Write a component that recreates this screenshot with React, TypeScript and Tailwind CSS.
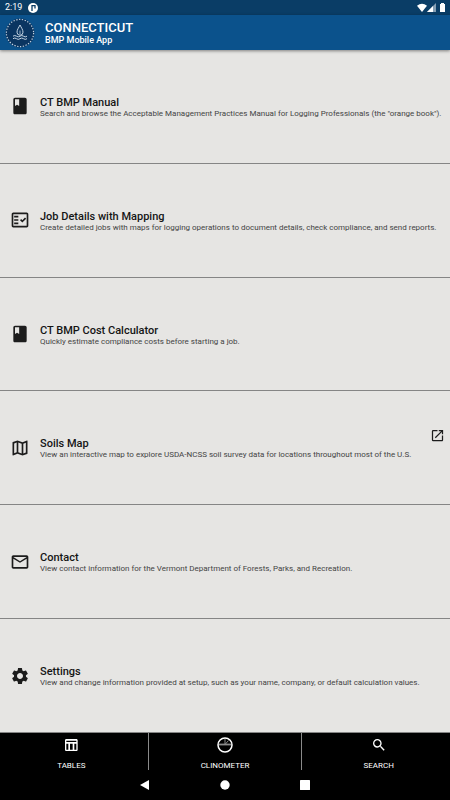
import type { ReactNode } from 'react';
import {
  MdBook,
  MdOpenInNew,
  MdOutlineEmail,
  MdOutlineFactCheck,
  MdOutlineMap,
  MdSearch,
  MdSettings,
} from 'react-icons/md';

type Item = { title: string; text: string; icon: ReactNode; external?: boolean };

const items: Item[] = [
  {
    title: 'CT BMP Manual',
    text: 'Search and browse the Acceptable Management Practices Manual for Logging Professionals (the "orange book").',
    icon: <MdBook size={20} />,
  },
  {
    title: 'Job Details with Mapping',
    text: 'Create detailed jobs with maps for logging operations to document details, check compliance, and send reports.',
    icon: <MdOutlineFactCheck size={20} />,
  },
  {
    title: 'CT BMP Cost Calculator',
    text: 'Quickly estimate compliance costs before starting a job.',
    icon: <MdBook size={20} />,
  },
  {
    title: 'Soils Map',
    text: 'View an interactive map to explore USDA-NCSS soil survey data for locations throughout most of the U.S.',
    icon: <MdOutlineMap size={20} />,
    external: true,
  },
  {
    title: 'Contact',
    text: 'View contact information for the Vermont Department of Forests, Parks, and Recreation.',
    icon: <MdOutlineEmail size={20} />,
  },
  {
    title: 'Settings',
    text: 'View and change information provided at setup, such as your name, company, or default calculation values.',
    icon: <MdSettings size={20} />,
  },
];

function Logo() {
  return (
    <svg width="30" height="30" viewBox="0 0 30 30" fill="none" aria-hidden="true">
      <circle cx="15" cy="15" r="14.5" fill="#0a3561" />
      <circle cx="15" cy="15" r="13.6" stroke="#c3d3e2" strokeWidth="1.2" strokeDasharray="1.3 1.55" />
      <path d="M15 7c-1.200 2.600-3 4.600-3 7.200a3 3 0 0 0 6 0c0-2.600-1.800-4.600-3-7.200z" stroke="#c3d3e2" strokeWidth="1" />
      <path d="M15 12.500v3.500" stroke="#c3d3e2" strokeWidth="0.8" />
      <path
        d="M8 18.200q1.750-1.400 3.500 0t3.500 0 3.500 0 3.500 0M8 20.700q1.750-1.400 3.500 0t3.500 0 3.500 0 3.500 0"
        stroke="#c3d3e2"
        strokeWidth="1"
      />
    </svg>
  );
}

function TableIcon() {
  return (
    <svg width="16" height="16" viewBox="0 0 24 24" fill="currentColor" aria-hidden="true">
      <path d="M20 3H5c-1.100 0-2 .9-2 2v14c0 1.100.9 2 2 2h15c1.100 0 2-.9 2-2V5c0-1.100-.9-2-2-2zm0 2.500v2H5v-2h15zm-5.500 13.500h-4v-9h4v9zM5 10h3v9H5v-9zm12 9v-9h3v9h-3z" />
    </svg>
  );
}

function ClinometerIcon() {
  return (
    <svg width="16" height="16" viewBox="0 0 16 16" fill="none" stroke="#fff" aria-hidden="true">
      <path d="M1.500 7.500h13" stroke="#8a8a8a" strokeWidth="1.800" />
      <path d="M8 1.500v6M8 7.500l3.500-4" stroke="#8a8a8a" strokeWidth="1" />
      <circle cx="8" cy="8" r="7" strokeWidth="1.500" />
    </svg>
  );
}

function StatusBar() {
  return (
    <div className="flex h-[15px] items-center justify-between bg-[#0a3d66] pr-1 pl-[5px] text-white">
      <div className="flex items-center gap-1.5">
        <span className="text-[9px] leading-[15px]">2:19</span>
        <svg width="10" height="10" viewBox="0 0 10 10" aria-hidden="true">
          <circle cx="5" cy="5" r="5" fill="#fff" />
          <path d="M4 8V2M4 2.600H7V5.400" fill="none" stroke="#0a3d66" strokeWidth="1.300" />
        </svg>
      </div>
      <svg width="30" height="10" viewBox="0 0 30 10" fill="#fff" aria-hidden="true">
        <path d="M1 2.800Q6 -1.200 11 2.800L6 9z" />
        <path d="M20 0v9h-9z" fillOpacity="0.500" />
        <path d="M17 3v6h-6z" />
        <path d="M24 1h1V0h3v1h1v8h-5z" />
      </svg>
    </div>
  );
}

function Row({ item }: { item: Item }) {
  return (
    <li className="flex flex-1 border-b border-[#858585] last:border-b-0">
      <button type="button" className="relative flex w-full items-center pl-2.5 text-left">
        <span className="flex w-[30px] shrink-0 text-[#1c1c1c]">{item.icon}</span>
        <span className="flex min-w-0 flex-col pt-[3px]">
          <span className="text-[11px] leading-[12px] font-medium text-[#151515]">{item.title}</span>
          <span className="text-[8px] leading-[10px] text-[#444]">{item.text}</span>
        </span>
        {item.external && (
          <MdOpenInNew size={15} className="absolute top-[37px] right-[5px] text-[#1c1c1c]" />
        )}
      </button>
    </li>
  );
}

function Tab({ label, children }: { label: string; children: ReactNode }) {
  return (
    <button
      type="button"
      className="flex h-[37px] flex-1 flex-col items-center justify-between border-r border-[#8a8a8a] pt-1 last:border-r-0"
    >
      {children}
      <span className="text-[8px] leading-[9px]">{label}</span>
    </button>
  );
}

export default function App() {
  return (
    <div className="flex min-h-screen flex-col overflow-hidden bg-[#e6e5e3] font-['Roboto','Liberation_Sans',sans-serif]">
      <StatusBar />
      <header className="z-10 flex h-[35px] items-center gap-2.5 bg-[#0b528c] pl-[5px] text-white shadow-[0_1px_3px_rgba(0,0,0,0.45)]">
        <Logo />
        <div>
          <h1 className="text-[13px] leading-[14px] font-medium">CONNECTICUT</h1>
          <p className="text-[9px] leading-[10px] font-medium">BMP Mobile App</p>
        </div>
      </header>
      <main className="flex flex-1 flex-col">
        <ul className="flex flex-1 flex-col">
          {items.map((item) => (
            <Row key={item.title} item={item} />
          ))}
        </ul>
      </main>
      <footer className="border-t border-[#858585] bg-black text-white">
        <nav className="-mx-[5px] flex">
          <Tab label="TABLES">
            <TableIcon />
          </Tab>
          <Tab label="CLINOMETER">
            <ClinometerIcon />
          </Tab>
          <Tab label="SEARCH">
            <MdSearch size={16} />
          </Tab>
        </nav>
        <div className="flex h-[30px] items-center justify-center gap-[70px]">
          <button type="button" aria-label="Back">
            <svg width="10" height="10" viewBox="0 0 10 10" fill="#fff">
              <path d="M9 0v10L0 5z" />
            </svg>
          </button>
          <button type="button" aria-label="Home">
            <svg width="10" height="10" viewBox="0 0 10 10" fill="#fff">
              <circle cx="5" cy="5" r="4.700" />
            </svg>
          </button>
          <button type="button" aria-label="Recent apps">
            <svg width="10" height="10" viewBox="0 0 10 10" fill="#fff">
              <rect width="10" height="10" rx="0.500" />
            </svg>
          </button>
        </div>
      </footer>
    </div>
  );
}
